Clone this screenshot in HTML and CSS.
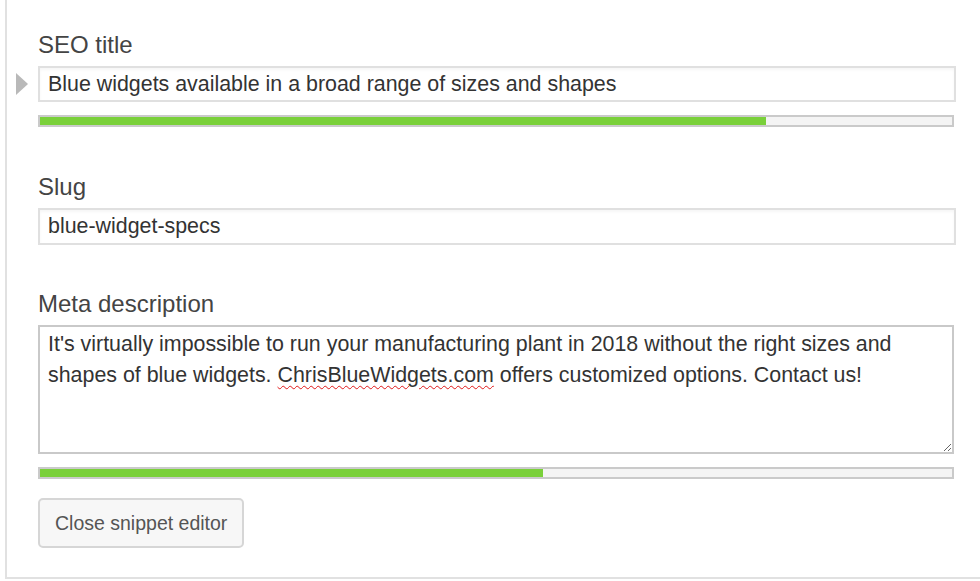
FILE: index.html
```html
<!DOCTYPE html>
<html>
<head>
<meta charset="UTF-8">
<title>Snippet editor</title>
<link rel="stylesheet" href="styles.css">
</head>
<body>

	<div class="panel">
		<form class="snippetForm">

			<div class="field">
				<label class="fieldLabel" for="seoTitle">SEO title</label>
				<div class="inputWrap">
					<span class="caret"></span>
					<input type="text" class="txt" id="seoTitle" value="Blue widgets available in a broad range of sizes and shapes">
				</div>
				<div class="progress"><div class="progressBar" style="width: 79.6%"></div></div>
			</div>

			<div class="field slugField">
				<label class="fieldLabel" for="slug">Slug</label>
				<input type="text" class="txt" id="slug" value="blue-widget-specs">
			</div>

			<div class="field">
				<label class="fieldLabel" for="metaDesc">Meta description</label>
				<!-- 맞춤법 밑줄을 보이려고 textarea 대신 div 사용 -->
				<div class="area" id="metaDesc" role="textbox">It's virtually impossible to run your manufacturing plant in 2018 without the right sizes and shapes of blue widgets. <span class="typo">ChrisBlueWidgets.com</span> offers customized options. Contact us!</div>
				<div class="progress"><div class="progressBar" style="width: 55.2%"></div></div>
			</div>

			<button type="button" class="btn" id="btnClose">Close snippet editor</button>

		</form>
	</div>

</body>
</html>
```

FILE: styles.css
```css
html, body {
	margin: 0;
	background: #fff;
	overflow: hidden;
}

body {
	font-family: "Liberation Sans", Arial, sans-serif;
	color: #333;
}

.panel {
	margin-left: 5px;
	border-left: 2px solid #e1e1e1;
	border-bottom: 2px solid #e1e1e1;
	padding: 31px 0 29px 31px;
	background: #fff;
}

.snippetForm {
	width: 918px;
}

.field {
	margin-bottom: 46px;
}

.slugField {
	margin-bottom: 45px;
}

.field:last-of-type {
	margin-bottom: 19px;
}

.fieldLabel {
	display: block;
	font-size: 24px;
	line-height: 28px;
	color: #444;
	margin-bottom: 7px;
}

.inputWrap {
	position: relative;
}

/* 왼쪽 회색 화살표 */
.caret {
	position: absolute;
	left: -22px;
	top: 7px;
	width: 0;
	height: 0;
	border-top: 11px solid transparent;
	border-bottom: 11px solid transparent;
	border-left: 12px solid #b9b9b9;
}

.txt {
	display: block;
	box-sizing: border-box;
	width: 918px;
	height: 36px;
	margin: 0;
	padding: 0 8px;
	border: 2px solid #e0e0e0;
	box-shadow: inset 0 2px 3px rgba(0,0,0,.04);
	font-family: "Liberation Sans", Arial, sans-serif;
	font-size: 21.4px;
	color: #333;
	background: #fff;
	outline: none;
}

#slug {
	height: 37px;
}

.area {
	box-sizing: border-box;
	width: 916px;
	height: 129px;
	padding: 2px 8px;
	border: 2px solid #c9c9c9;
	font-size: 21.4px;
	line-height: 31px;
	color: #333;
	background: #fff;
	resize: vertical;
	overflow: auto;
}

.typo {
	text-decoration: underline wavy #e01818;
	text-decoration-thickness: 1px;
	text-underline-offset: 3px;
}

.progress {
	box-sizing: border-box;
	width: 916px;
	height: 12px;
	margin-top: 13px;
	border: 2px solid #cacaca;
	background: #f4f4f4;
}

.progressBar {
	height: 100%;
	background: #7ad03a;
}

.btn {
	box-sizing: border-box;
	height: 50px;
	padding: 0 15px;
	border: 2px solid #d6d6d6;
	border-radius: 5px;
	background: #f7f7f7;
	font-family: "Liberation Sans", Arial, sans-serif;
	font-size: 19.5px;
	color: #555;
}
```
